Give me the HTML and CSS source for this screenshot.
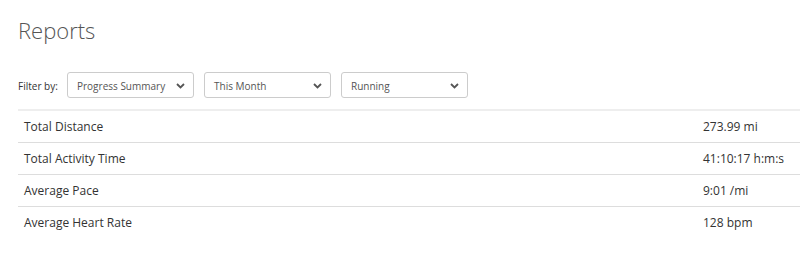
FILE: index.html
```html
<!DOCTYPE html>
<html>
<head>
<meta charset="utf-8">
<link rel="stylesheet" href="styles.css">
</head>
<body>
<div class="page">
  <h1 class="title">Reports</h1>
  <div class="filters">
    <span class="filter-label">Filter by:</span>
    <div class="select"><span>Progress Summary</span><svg class="chev" width="9" height="6" viewBox="0 0 9 6"><path d="M1 1l3.5 3.5L8 1" fill="none" stroke="#555" stroke-width="1.8"/></svg></div>
    <div class="select"><span>This Month</span><svg class="chev" width="9" height="6" viewBox="0 0 9 6"><path d="M1 1l3.5 3.5L8 1" fill="none" stroke="#555" stroke-width="1.8"/></svg></div>
    <div class="select"><span>Running</span><svg class="chev" width="9" height="6" viewBox="0 0 9 6"><path d="M1 1l3.5 3.5L8 1" fill="none" stroke="#555" stroke-width="1.8"/></svg></div>
  </div>
  <table class="stats">
    <tr><td class="label">Total Distance</td><td class="value">273.99 mi</td></tr>
    <tr><td class="label">Total Activity Time</td><td class="value">41:10:17 h:m:s</td></tr>
    <tr><td class="label">Average Pace</td><td class="value">9:01 /mi</td></tr>
    <tr><td class="label">Average Heart Rate</td><td class="value">128 bpm</td></tr>
  </table>
</div>
</body>
</html>
```
FILE: styles.css
```css
html, body { margin: 0; padding: 0; background: #fff; }
body { font-family: "Open Sans", sans-serif; color: #333; overflow: hidden; }
.page { padding: 0 0 0 18px; }
.title { margin: 0; padding-top: 14px; font-size: 22px; font-weight: 300; color: #555; line-height: 32px; height: 31px; }
.filters { display: flex; align-items: center; margin-top: 27px; height: 26px; }
.filter-label { font-size: 10px; color: #333; width: 49px; padding-top: 1px; }
.select { box-sizing: border-box; width: 127px; height: 26px; border: 1px solid #ccc; border-radius: 3px; display: flex; align-items: center; justify-content: space-between; padding: 1px 8px 0 9px; margin-right: 10px; font-size: 10px; color: #555; }
.chev { display: block; }
.stats { margin-top: 11px; border-collapse: collapse; width: 782px; border-top: 2px solid #eee; }
.stats td { border-bottom: 1px solid #ddd; height: 32px; padding: 1px 0 0 0; font-size: 12px; color: #333; box-sizing: border-box; }
.stats tr:last-child td { border-bottom: none; }
.label { padding-left: 6px !important; }
.value { width: 97px; }
```
